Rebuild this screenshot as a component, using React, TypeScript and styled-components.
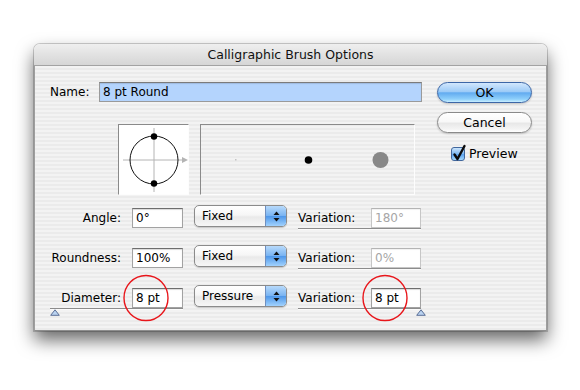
import React from "react";
import styled, { createGlobalStyle } from "styled-components";

const Global = createGlobalStyle`
  html, body { margin: 0; padding: 0; background: #ffffff; }
  body {
    width: 580px; height: 390px; overflow: hidden;
    font-family: "DejaVu Sans", "Liberation Sans", sans-serif;
    font-size: 12px; color: #000;
  }
`;

const Desktop = styled.div`
  width: 580px;
  height: 390px;
  box-sizing: border-box;
  padding: 44px 0 0 34px;
`;

const Window = styled.div`
  width: 513px;
  height: 287px;
  display: flex;
  flex-direction: column;
  border-radius: 6px 6px 0 0;
  box-shadow: 0 0 0 1px rgba(0, 0, 0, 0.18), 0 9px 18px rgba(0, 0, 0, 0.6);
  overflow: hidden;
`;

const TitleBar = styled.div`
  flex: none;
  height: 21px;
  display: flex;
  align-items: center;
  justify-content: center;
  font-size: 12.5px;
  color: #111;
  background: linear-gradient(#efefef, #e2e2e2 50%, #d6d6d6);
  border-bottom: 1px solid #a3a3a3;
`;

const Body = styled.div`
  flex: 1;
  display: flex;
  gap: 15px;
  box-sizing: border-box;
  padding: 16px 14px 0 15px;
  border-left: 1px solid #9e9e9e;
  border-right: 1px solid #9e9e9e;
  border-bottom: 1px solid #8e8e8e;
  background: repeating-linear-gradient(
    to bottom,
    #f3f3f3 0,
    #f3f3f3 2px,
    #ebebeb 2px,
    #ebebeb 4px
  );
`;

const MainColumn = styled.div`
  width: 372px;
  display: flex;
  flex-direction: column;
`;

const NameRow = styled.div`
  display: flex;
  align-items: center;
  height: 20px;
`;

const NameLabel = styled.span`
  width: 49px;
`;

const NameField = styled.div`
  width: 323px;
  height: 20px;
  box-sizing: border-box;
  padding-left: 3px;
  line-height: 18px;
  background: #b4d4fd;
  border: 1px solid #9a9a9a;
  border-top-color: #7b7b7b;
  box-shadow: inset 0 1px 1px rgba(0, 0, 0, 0.12);
`;

const PreviewRow = styled.div`
  display: flex;
  gap: 11px;
  margin-top: 22px;
  padding-left: 68px;
`;

const PreviewBox = styled.div<{ $w: number; $white?: boolean }>`
  width: ${(p) => p.$w}px;
  height: 71px;
  box-sizing: border-box;
  border-top: 1px solid #8a8a8a;
  border-left: 1px solid #8a8a8a;
  border-right: 1px solid #fdfdfd;
  border-bottom: 1px solid #fdfdfd;
  background: ${(p) => (p.$white ? "#ffffff" : "transparent")};
  svg { display: block; }
`;

const Rows = styled.div`
  display: flex;
  flex-direction: column;
  gap: 16px;
  margin-top: 10px;
`;

const Row = styled.div`
  display: flex;
  align-items: flex-start;
  height: 24px;
  gap: 11px;
`;

const Group = styled.div<{ $track?: boolean }>`
  position: relative;
  display: flex;
  align-items: center;
  height: 24px;
  box-sizing: border-box;
  padding-top: 2px;
  border-bottom: 1px solid ${(p) => (p.$track ? "#8c8c8c" : "transparent")};
  box-shadow: ${(p) => (p.$track ? "0 1px 0 #fbfbfb" : "none")};
`;

const RowLabel = styled.span`
  width: 71px;
  margin-right: 11px;
  text-align: right;
`;

const VarLabel = styled.span`
  width: 73px;
`;

const InputWrap = styled.div`
  position: relative;
`;

const TextInput = styled.div<{ $w: number; $disabled?: boolean }>`
  width: ${(p) => p.$w}px;
  height: 20px;
  box-sizing: border-box;
  padding-left: 3px;
  line-height: 18px;
  font-size: 12px;
  background: #ffffff;
  color: ${(p) => (p.$disabled ? "#a6a6a6" : "#000")};
  border: 1px solid ${(p) => (p.$disabled ? "#c6c6c6" : "#a2a2a2")};
  border-top-color: ${(p) => (p.$disabled ? "#b4b4b4" : "#6e6e6e")};
  box-shadow: inset 0 1px 1px rgba(0, 0, 0, ${(p) => (p.$disabled ? 0.06 : 0.15)});
`;

const Popup = styled.div`
  width: 93px;
  height: 22px;
  box-sizing: border-box;
  display: flex;
  border: 1px solid #8b8b8b;
  border-radius: 5px;
  overflow: hidden;
  background: linear-gradient(#ffffff, #f6f6f6 45%, #e9e9e9 55%, #f7f7f7);
  box-shadow: 0 1px 1px rgba(0, 0, 0, 0.18);
`;

const PopupText = styled.span`
  flex: 1;
  padding-left: 7px;
  line-height: 20px;
`;

const PopupArrows = styled.span`
  width: 20px;
  display: flex;
  align-items: center;
  justify-content: center;
  border-left: 1px solid #6f8fbf;
  background: linear-gradient(#b8dafb, #79b4f2 48%, #4f98ea 52%, #a2d2fd);
`;

const Marker = styled.svg<{ $side: "left" | "right" }>`
  position: absolute;
  bottom: -8px;
  ${(p) => (p.$side === "left" ? "left: 0;" : "right: -5px;")}
`;

const Ring = styled.svg`
  position: absolute;
  left: -12px;
  top: -15px;
  pointer-events: none;
  overflow: visible;
`;

const SideColumn = styled.div`
  width: 95px;
  display: flex;
  flex-direction: column;
  gap: 9px;
`;

const AquaButton = styled.div<{ $default?: boolean }>`
  height: 21px;
  box-sizing: border-box;
  border-radius: 11px;
  display: flex;
  align-items: center;
  justify-content: center;
  font-size: 12.5px;
  border: 1px solid ${(p) => (p.$default ? "#3c66a6" : "#8a8a8a")};
  background: ${(p) =>
    p.$default
      ? "linear-gradient(#d2e7fd, #9dcbf7 45%, #62abf0 52%, #8fd0fb 85%, #c9eeff)"
      : "linear-gradient(#ffffff, #f8f8f8 45%, #e8e8e8 55%, #f4f4f4 85%, #ffffff)"};
  box-shadow: 0 1px 2px rgba(0, 0, 0, 0.2);
`;

const CheckRow = styled.div`
  display: flex;
  align-items: center;
  gap: 4px;
  margin-top: 4px;
  padding-left: 14px;
  font-size: 12.5px;
`;

const CheckBox = styled.span`
  position: relative;
  width: 14px;
  height: 14px;
  box-sizing: border-box;
  border: 1px solid #41679d;
  border-radius: 3px;
  background: linear-gradient(#cbe4fb, #7ab6f0 50%, #5aa2ee 55%, #a6dafd);
  svg {
    position: absolute;
    left: 0px;
    top: -4px;
    overflow: visible;
  }
`;

const PopupArrowIcon = () => (
  <svg width="7" height="11" viewBox="0 0 7 11">
    <path d="M3.5 0.5 L6.5 4 L0.5 4 Z" fill="#111" />
    <path d="M0.5 7 L6.5 7 L3.5 10.5 Z" fill="#111" />
  </svg>
);

const SelectBox = ({ label }: { label: string }) => (
  <Popup>
    <PopupText>{label}</PopupText>
    <PopupArrows>
      <PopupArrowIcon />
    </PopupArrows>
  </Popup>
);

const SliderMarker = ({ side }: { side: "left" | "right" }) => (
  <Marker $side={side} width="10" height="7" viewBox="0 0 10 7">
    <path d="M5 0.8 L9.3 6.3 L0.7 6.3 Z" fill="#b9d2f0" stroke="#5b6f96" strokeWidth="1" />
  </Marker>
);

const RedRing = () => (
  <Ring width="46" height="48" viewBox="0 0 46 48">
    <ellipse cx="26" cy="25" rx="22" ry="22.5" fill="none" stroke="#e8161b" strokeWidth="1.4" />
  </Ring>
);

export default function App() {
  return (
    <Desktop>
      <Global />
      <Window>
        <TitleBar>Calligraphic Brush Options</TitleBar>
        <Body>
          <MainColumn>
            <NameRow>
              <NameLabel>Name:</NameLabel>
              <NameField>8 pt Round</NameField>
            </NameRow>

            <PreviewRow>
              <PreviewBox $w={71} $white>
                <svg width="70" height="70" viewBox="0 0 70 70">
                  <line x1="4" y1="35" x2="66" y2="35" stroke="#b4b4b4" strokeWidth="1" />
                  <path d="M63 32 L69 35 L63 38 Z" fill="#b4b4b4" />
                  <line x1="35" y1="3" x2="35" y2="67" stroke="#b4b4b4" strokeWidth="1" />
                  <circle cx="35" cy="35" r="24" fill="none" stroke="#111" strokeWidth="1" />
                  <circle cx="35" cy="11.5" r="3.2" fill="#000" />
                  <circle cx="35" cy="58.5" r="3.2" fill="#000" />
                </svg>
              </PreviewBox>
              <PreviewBox $w={215}>
                <svg width="213" height="69" viewBox="0 0 213 69">
                  <rect x="34" y="34" width="1.5" height="1.5" fill="#c4c4c4" />
                  <circle cx="107.5" cy="35" r="3.8" fill="#000" />
                  <circle cx="179.5" cy="35" r="8" fill="#888888" />
                </svg>
              </PreviewBox>
            </PreviewRow>

            <Rows>
              <Row>
                <Group>
                  <RowLabel>Angle:</RowLabel>
                  <TextInput $w={51}>0°</TextInput>
                </Group>
                <SelectBox label="Fixed" />
                <Group $track>
                  <VarLabel>Variation:</VarLabel>
                  <TextInput $w={50} $disabled>180°</TextInput>
                </Group>
              </Row>
              <Row>
                <Group>
                  <RowLabel>Roundness:</RowLabel>
                  <TextInput $w={51}>100%</TextInput>
                </Group>
                <SelectBox label="Fixed" />
                <Group $track>
                  <VarLabel>Variation:</VarLabel>
                  <TextInput $w={50} $disabled>0%</TextInput>
                </Group>
              </Row>
              <Row>
                <Group $track>
                  <RowLabel>Diameter:</RowLabel>
                  <InputWrap>
                    <TextInput $w={51}>8 pt</TextInput>
                    <RedRing />
                  </InputWrap>
                  <SliderMarker side="left" />
                </Group>
                <SelectBox label="Pressure" />
                <Group $track>
                  <VarLabel>Variation:</VarLabel>
                  <InputWrap>
                    <TextInput $w={50}>8 pt</TextInput>
                    <RedRing />
                  </InputWrap>
                  <SliderMarker side="right" />
                </Group>
              </Row>
            </Rows>
          </MainColumn>

          <SideColumn>
            <AquaButton $default>OK</AquaButton>
            <AquaButton>Cancel</AquaButton>
            <CheckRow>
              <CheckBox>
                <svg width="14" height="18" viewBox="0 0 14 18">
                  <path
                    d="M2.5 10.5 L5.5 15 L12.5 2"
                    fill="none"
                    stroke="#0a0a0a"
                    strokeWidth="2.4"
                    strokeLinecap="round"
                    strokeLinejoin="round"
                  />
                </svg>
              </CheckBox>
              Preview
            </CheckRow>
          </SideColumn>
        </Body>
      </Window>
    </Desktop>
  );
}
